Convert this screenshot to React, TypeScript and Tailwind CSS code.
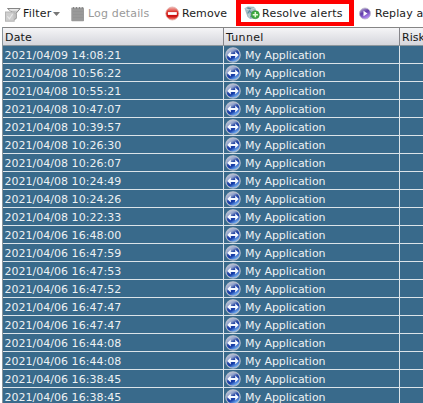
import React from "react";

const dates = [
  "2021/04/09 14:08:21",
  "2021/04/08 10:56:22",
  "2021/04/08 10:55:21",
  "2021/04/08 10:47:07",
  "2021/04/08 10:39:57",
  "2021/04/08 10:26:30",
  "2021/04/08 10:26:07",
  "2021/04/08 10:24:49",
  "2021/04/08 10:24:26",
  "2021/04/08 10:22:33",
  "2021/04/06 16:48:00",
  "2021/04/06 16:47:59",
  "2021/04/06 16:47:53",
  "2021/04/06 16:47:52",
  "2021/04/06 16:47:47",
  "2021/04/06 16:47:47",
  "2021/04/06 16:44:08",
  "2021/04/06 16:44:08",
  "2021/04/06 16:38:45",
  "2021/04/06 16:38:45",
];

function Gradients() {
  return (
    <svg className="absolute size-0">
      <defs>
        <linearGradient id="tunnel" x1="0.1" y1="0" x2="0.7" y2="1">
          <stop offset="0" stopColor="#d3d8e4" />
          <stop offset="0.33" stopColor="#8fa0ca" />
          <stop offset="0.48" stopColor="#2c4ca6" />
          <stop offset="0.66" stopColor="#1238a6" />
          <stop offset="0.95" stopColor="#7ebcfa" />
        </linearGradient>
        <linearGradient id="remove" x1="0" y1="0" x2="0" y2="1">
          <stop offset="0" stopColor="#f3b8b2" />
          <stop offset="0.4" stopColor="#d92a22" />
          <stop offset="0.7" stopColor="#cb0909" />
          <stop offset="1" stopColor="#f98a78" />
        </linearGradient>
        <linearGradient id="replay" x1="0" y1="0" x2="0.5" y2="1">
          <stop offset="0" stopColor="#cdc6dc" />
          <stop offset="0.5" stopColor="#5f3aa8" />
          <stop offset="1" stopColor="#b48cf4" />
        </linearGradient>
      </defs>
    </svg>
  );
}

function TunnelIcon() {
  return (
    <svg className="size-4 shrink-0" viewBox="0 0 16 16">
      <circle cx="8" cy="8" r="7.2" fill="url(#tunnel)" stroke="#b3bccb" strokeWidth="1.2" />
      <path d="M2.2 8 5.8 4.6V6.9H10.2V4.6L13.8 8 10.2 11.4V9.1H5.8V11.4Z" fill="#f4f8ff" />
    </svg>
  );
}

function FilterIcon() {
  return (
    <svg className="h-4 w-[17px] shrink-0" viewBox="0 0 17 16">
      <path d="M2.5 2.5H15.2L11.2 7.2V12.5L8.4 14V7.2Z" fill="#c4c4c4" stroke="#858585" />
      <path d="M4 3.2H13.8L12.5 4.4H5.2Z" fill="#f7f7f7" />
      <path d="M9.7 7.7V12.5" stroke="#eee" />
      <rect x="0.5" y="6" width="8.7" height="9.2" fill="#cecece" stroke="#b4b4b4" />
      <path d="M2.4 10.4 4.4 12.8 7.6 8" fill="none" stroke="#e8e8e8" strokeWidth="1.2" />
    </svg>
  );
}

function LogIcon() {
  return (
    <svg className="h-4 w-[14px] shrink-0" viewBox="0 0 14 16">
      <rect x="0.3" y="1.6" width="12.7" height="13.6" rx="0.8" fill="#999" />
      <path d="M2.5 1V3M5.5 1V3M8.5 1V3M11.3 1V3" stroke="#858585" />
      <path d="M2 5.5H12M2 8.5H12M2 11.5H12" stroke="#929292" strokeWidth="0.7" />
    </svg>
  );
}

function RemoveIcon() {
  return (
    <svg className="h-4 w-[15px] shrink-0" viewBox="0 0 15 16">
      <circle cx="7.3" cy="7.5" r="6.5" fill="url(#remove)" stroke="#e0aaa4" strokeWidth="0.8" />
      <rect x="2.9" y="6.1" width="8.9" height="2.8" fill="white" />
    </svg>
  );
}

function ResolveIcon() {
  return (
    <svg className="h-4 w-4 shrink-0" viewBox="0 0 16 16">
      <path d="M0.5 3.2 3.7 1.6 9.8 1.8 11.8 4 10 13.4 6.2 14 3.4 11.8Z" fill="#a3bbc2" />
      <path d="M1.5 3.7 5 5.2 10.9 3.2M4.2 6.4 5.4 12.3M9 5.5 8.6 12.8" fill="none" stroke="#cfdfe4" strokeWidth="0.8" />
      <path d="M3.8 8.5 5.4 5.8 7.6 8M6.2 11.5H9M3.5 3 7 3.9" fill="none" stroke="#5c91a2" strokeWidth="1.3" />
      <circle cx="11.3" cy="9.7" r="4" fill="#3aaa3d" stroke="#3b9145" strokeWidth="0.7" />
      <path d="M8.7 9.7H13.9M11.3 7.1V12.3" stroke="#e4f8d9" strokeWidth="1.5" />
    </svg>
  );
}

function ReplayIcon() {
  return (
    <svg className="h-4 w-3 shrink-0" viewBox="0 0 12 16">
      <circle cx="6" cy="7.5" r="5.5" fill="url(#replay)" stroke="#bbb6c9" strokeWidth="0.8" />
      <path d="M4.5 4.7 8.5 7.5 4.5 10.3Z" fill="white" />
    </svg>
  );
}

function Toolbar() {
  return (
    <div className="flex h-[27px] w-[500px] shrink-0 items-start text-[#1b1b1b]">
      <div className="ml-[5px] flex h-[27px] w-[66px] shrink-0 items-center">
        <FilterIcon />
        <span className="ml-px w-[28px] tracking-[0.2px]">Filter</span>
        <svg className="ml-[2px] h-1 w-[7px] shrink-0" viewBox="0 0 7 4">
          <path d="M0 0H7L3.5 4Z" fill="#777" />
        </svg>
      </div>
      <div className="flex h-[27px] w-[94px] shrink-0 items-center gap-[3px] text-[#999]">
        <LogIcon />
        <span className="tracking-[0.15px]">Log details</span>
      </div>
      <div className="flex h-[27px] w-[71px] shrink-0 items-center gap-[2px]">
        <RemoveIcon />
        <span className="tracking-[0.1px]">Remove</span>
      </div>
      <div className="flex h-[26px] w-[118px] shrink-0 items-center border-[5px] border-y-4 border-[#fe0000] pl-[3px]">
        <ResolveIcon />
        <span className="ml-[2px] tracking-[0.24px]">Resolve alerts</span>
      </div>
      <div className="ml-[5px] flex h-[27px] shrink-0 items-center gap-1">
        <ReplayIcon />
        <span className="tracking-[0.1px]">Replay a</span>
      </div>
    </div>
  );
}

export default function App() {
  return (
    <main className="flex h-[403px] w-[423px] flex-col overflow-hidden bg-white font-['DejaVu_Sans',sans-serif] text-[11px] leading-[17px] whitespace-nowrap">
      <Gradients />
      <Toolbar />
      <section className="ml-[2px] w-[421px] border-l border-[#8b959b]">
        <div className="grid h-[19px] grid-cols-[221px_176px_1fr] border-t border-b border-t-[#858585] border-b-[#8c969c] bg-linear-to-b from-[#f5f5f7] to-[#d5d6dc] leading-[19px] text-[#161616]">
          <div className="h-[17px] border-r border-[#85858a] pl-[2px] tracking-[0.2px]">Date</div>
          <div className="h-[17px] border-r border-[#85858a] pl-[2px] tracking-[0.3px]">Tunnel</div>
          <div className="h-[17px] pl-[2px]">Risk</div>
        </div>
        {dates.map((date, index) => (
          <div key={index} className="grid h-[18px] grid-cols-[221px_176px_1fr] border-b border-[#dce4e9] bg-[#396a8b] text-[#edf1f3]">
            <div className="h-[17px] border-r border-[#dce4e9] pl-[1.5px] leading-[19px] tracking-[0.02px]">{date}</div>
            <div className="flex h-[17px] items-start gap-1 border-r border-[#dce4e9] pt-px pl-px">
              <TunnelIcon />
              <span className="tracking-[-0.03px]">My Application</span>
            </div>
            <div />
          </div>
        ))}
      </section>
    </main>
  );
}
